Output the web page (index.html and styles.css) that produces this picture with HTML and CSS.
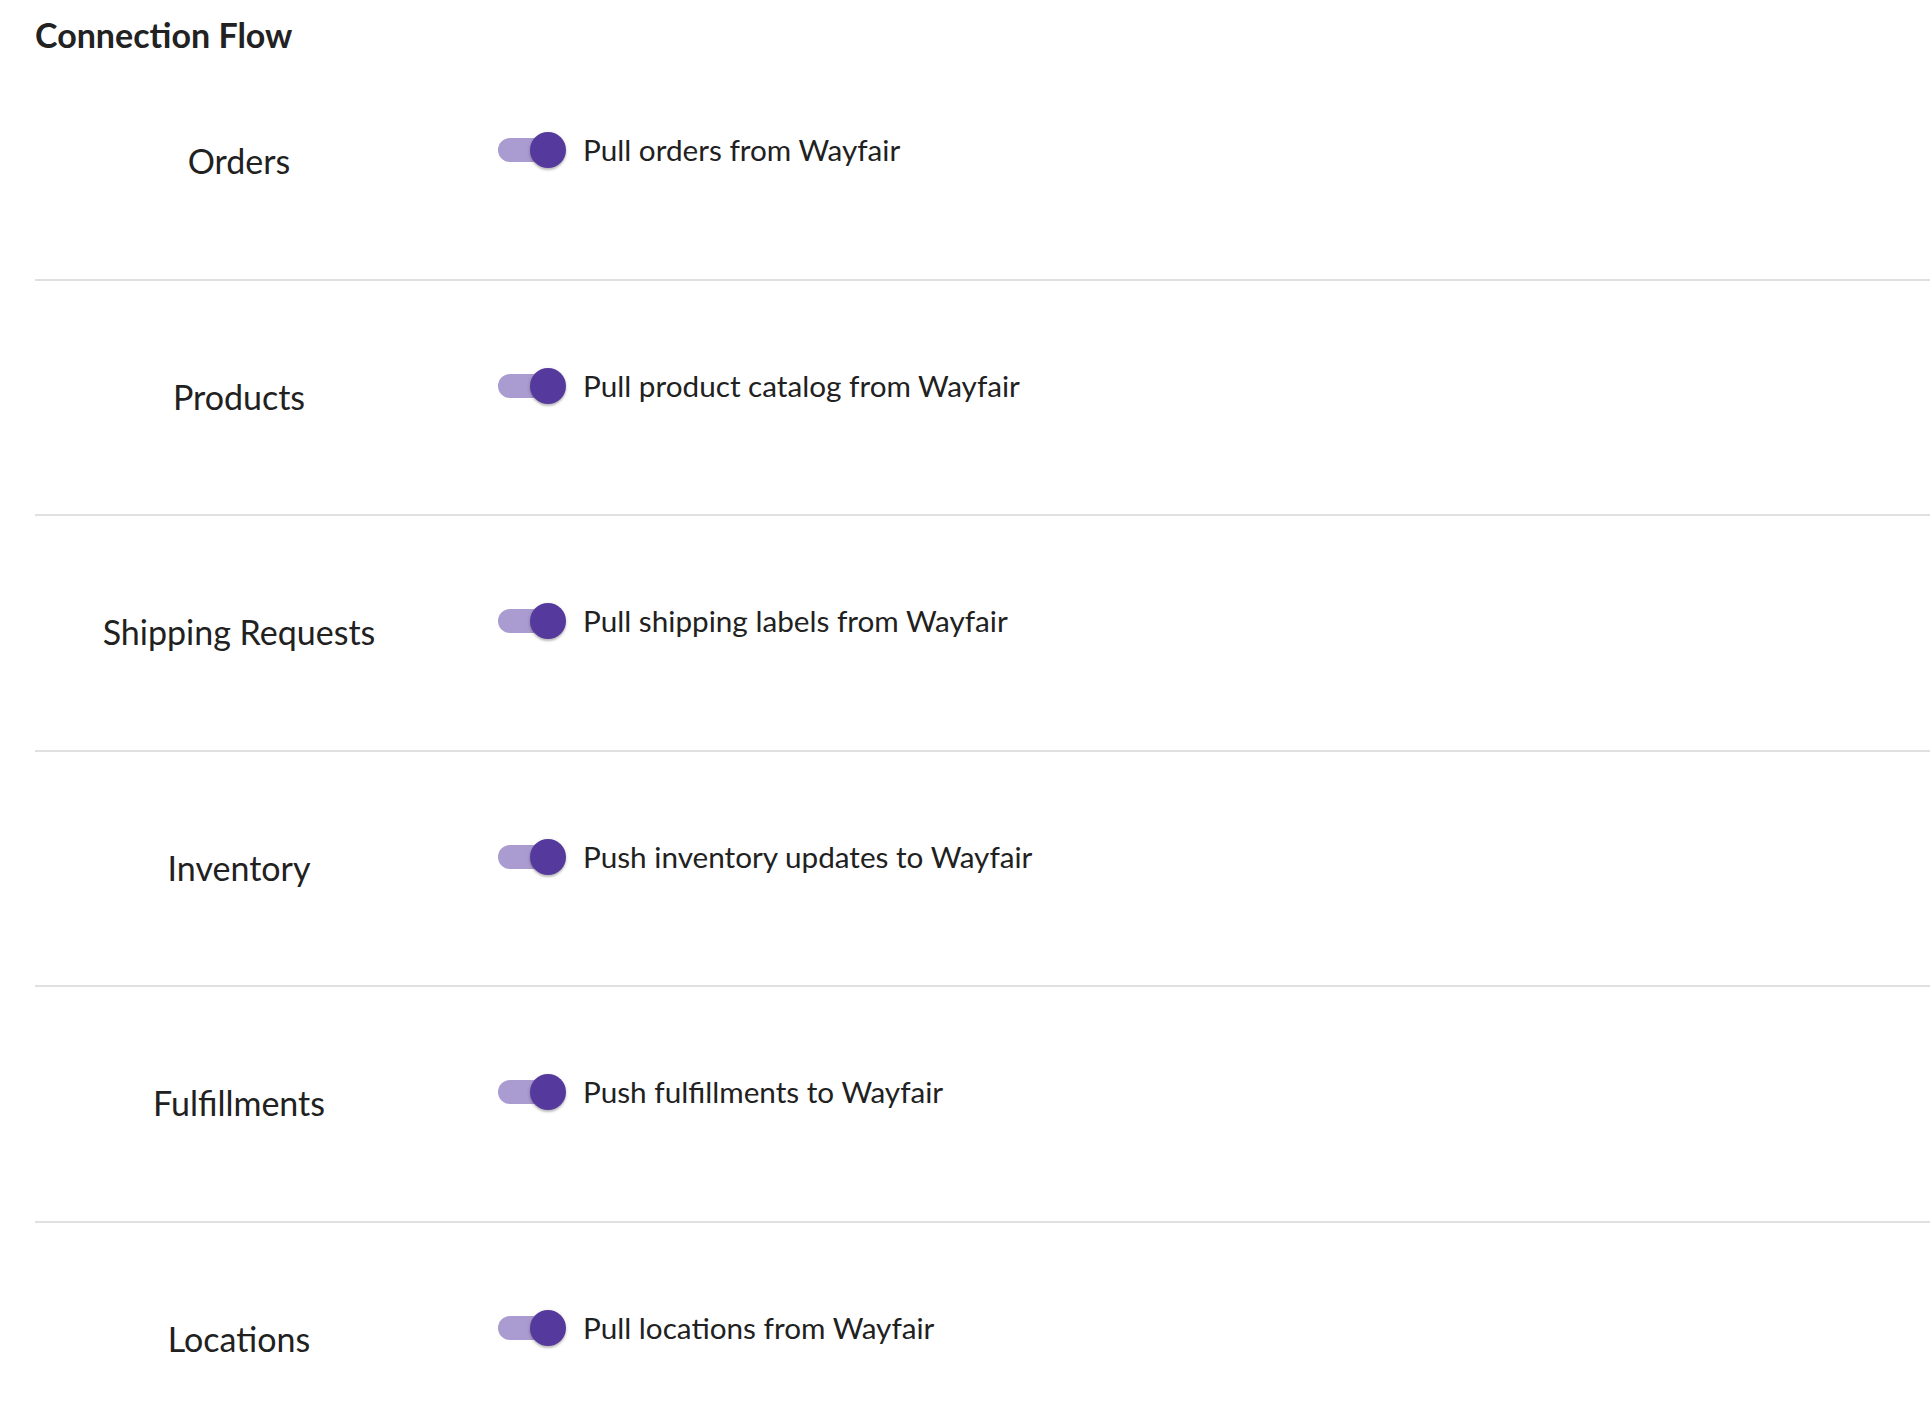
FILE: index.html
```html
<!DOCTYPE html>
<html lang="en">
<head>
  <meta charset="UTF-8">
  <title>Connection Flow</title>
  <link rel="stylesheet" href="styles.css">
</head>
<body>
  <div class="flow">
    <h2 class="flow-title">Connection Flow</h2>

    <div class="flow-row">
      <div class="flow-label">Orders</div>
      <label class="flow-option">
        <span class="switch"><span class="switch-track"></span><span class="switch-thumb"></span></span>
        <span class="option-text">Pull orders from Wayfair</span>
      </label>
    </div>

    <div class="flow-row">
      <div class="flow-label">Products</div>
      <label class="flow-option">
        <span class="switch"><span class="switch-track"></span><span class="switch-thumb"></span></span>
        <span class="option-text">Pull product catalog from Wayfair</span>
      </label>
    </div>

    <div class="flow-row">
      <div class="flow-label">Shipping Requests</div>
      <label class="flow-option">
        <span class="switch"><span class="switch-track"></span><span class="switch-thumb"></span></span>
        <span class="option-text">Pull shipping labels from Wayfair</span>
      </label>
    </div>

    <div class="flow-row">
      <div class="flow-label">Inventory</div>
      <label class="flow-option">
        <span class="switch"><span class="switch-track"></span><span class="switch-thumb"></span></span>
        <span class="option-text">Push inventory updates to Wayfair</span>
      </label>
    </div>

    <div class="flow-row">
      <div class="flow-label">Fulfillments</div>
      <label class="flow-option">
        <span class="switch"><span class="switch-track"></span><span class="switch-thumb"></span></span>
        <span class="option-text">Push fulfillments to Wayfair</span>
      </label>
    </div>

    <div class="flow-row">
      <div class="flow-label">Locations</div>
      <label class="flow-option">
        <span class="switch"><span class="switch-track"></span><span class="switch-thumb"></span></span>
        <span class="option-text">Pull locations from Wayfair</span>
      </label>
    </div>
  </div>
</body>
</html>
```

FILE: styles.css
```css
body {
  margin: 0;
  background: #ffffff;
  color: #212121;
  font-family: Lato, "Noto Sans", Arial, sans-serif;
}

.flow {
  padding-left: 35px;
}

.flow-title {
  margin: 0;
  height: 45px;
  padding-top: 18px;
  box-sizing: border-box;
  font-size: 34px;
  font-weight: 700;
  line-height: 1;
  color: #222222;
}

.flow-row {
  display: flex;
  align-items: flex-start;
  height: 235.6px;
  padding-top: 87px;
  box-sizing: border-box;
  border-bottom: 2px solid #e0e0e0;
}

.flow-label {
  width: 408px;
  flex-shrink: 0;
  margin-top: 11px;
  text-align: center;
  font-size: 34px;
  line-height: 36px;
}

.flow-option {
  display: flex;
  align-items: center;
  margin-left: 55px;
  gap: 17px;
  cursor: pointer;
}

.switch {
  position: relative;
  width: 68px;
  height: 36px;
  flex-shrink: 0;
}

.switch-track {
  position: absolute;
  left: 0;
  top: 6px;
  width: 60px;
  height: 24px;
  border-radius: 12px;
  background: #aa9bd0;
}

.switch-thumb {
  position: absolute;
  right: 0;
  top: 0;
  width: 36px;
  height: 36px;
  border-radius: 50%;
  background: #55399c;
  box-shadow: 0 2px 2px rgba(0,0,0,0.2), 0 1px 4px rgba(0,0,0,0.12);
}

.option-text {
  font-size: 29.7px;
  line-height: 36px;
}
```
